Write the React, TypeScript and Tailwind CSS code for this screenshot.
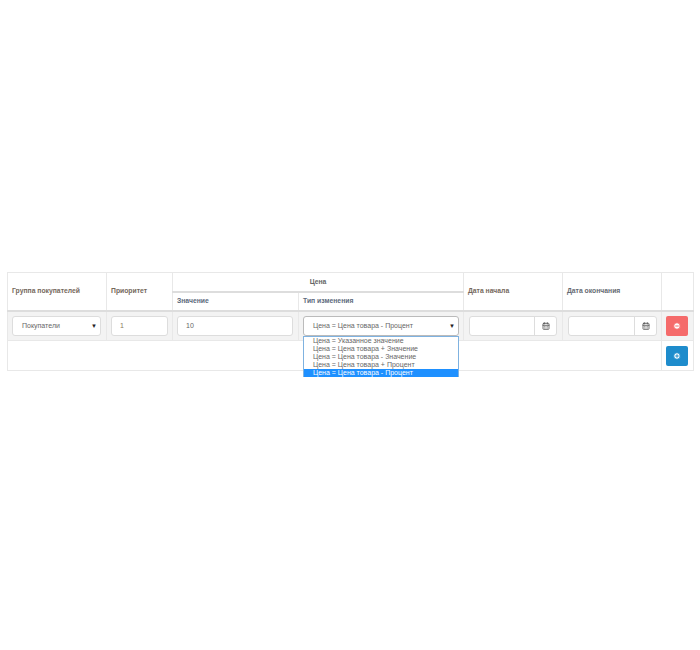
import React from "react";
import { CalendarDays, CircleMinus, CirclePlus } from "lucide-react";

const options = [
  "Цена = Указанное значение",
  "Цена = Цена товара + Значение",
  "Цена = Цена товара - Значение",
  "Цена = Цена товара + Процент",
  "Цена = Цена товара - Процент",
];

const Arrow = () => <span className="ml-auto text-[6px] leading-none text-[#222]">▼</span>;

const DateInput = () => (
  <div className="flex h-5 w-full rounded-[3px] border border-[#ddd] bg-white">
    <div className="flex-1 border-r border-[#ddd]" />
    <div className="flex w-[21px] items-center justify-center">
      <CalendarDays className="h-[8px] w-[8px] text-[#555]" strokeWidth={2.5} />
    </div>
  </div>
);

const App = () => {
  return (
    <div className="h-[650px] w-[700px] bg-white pt-[272px] pl-[7px] font-['Liberation_Sans',sans-serif] text-[7px] text-[#666]">
      <table className="w-[686px] table-fixed border-collapse border border-[#e4e4e4]">
        <colgroup>
          <col className="w-[99px]" />
          <col className="w-[66px]" />
          <col className="w-[126px]" />
          <col className="w-[165px]" />
          <col className="w-[99px]" />
          <col className="w-[99px]" />
          <col className="w-[32px]" />
        </colgroup>
        <thead className="text-[6.8px]">
          <tr className="h-[19px]">
            <th rowSpan={2} className="border border-[#e8e8e8] border-b-2 border-b-[#ddd] pl-[4px] text-left font-bold text-[#75685c]">Группа покупателей</th>
            <th rowSpan={2} className="border border-[#e8e8e8] border-b-2 border-b-[#ddd] pl-[4px] text-left font-bold text-[#75685c]">Приоритет</th>
            <th colSpan={2} className="border border-[#e8e8e8] border-b-2 border-b-[#ddd] pt-[1px] text-center font-bold text-[#666]">Цена</th>
            <th rowSpan={2} className="border border-[#e8e8e8] border-b-2 border-b-[#ddd] pl-[4px] text-left font-bold text-[#75685c]">Дата начала</th>
            <th rowSpan={2} className="border border-[#e8e8e8] border-b-2 border-b-[#ddd] pl-[4px] text-left font-bold text-[#656a72]">Дата окончания</th>
            <th rowSpan={2} className="border border-[#e8e8e8] border-b-2 border-b-[#ddd]" />
          </tr>
          <tr className="h-[19px]">
            <th className="border border-[#e8e8e8] border-b-2 border-b-[#ddd] pt-[1px] pl-[4px] text-left font-bold text-[#5c6a7c]">Значение</th>
            <th className="border border-[#e8e8e8] border-b-2 border-b-[#ddd] pt-[1px] pl-[4px] text-left font-bold text-[#5c6a7c]">Тип изменения</th>
          </tr>
        </thead>
        <tbody>
          <tr className="h-[30px] bg-[#f3f3f3]">
            <td className="border border-[#e8e8e8] pr-[5px] pl-[4px]">
              <div className="flex h-5 items-center rounded-[3px] border border-[#ddd] bg-white pt-[1px] pr-[3px] pl-[9px]">
                Покупатели
                <Arrow />
              </div>
            </td>
            <td className="border border-[#e8e8e8] px-[4px]">
              <div className="flex h-5 items-center rounded-[3px] border border-[#ddd] bg-white pl-[8px] text-[#8a7a60]">1</div>
            </td>
            <td className="border border-[#e8e8e8] pr-[5px] pl-[4px]">
              <div className="flex h-5 items-center rounded-[3px] border border-[#ddd] bg-white pl-[8px]">10</div>
            </td>
            <td className="relative border border-[#e8e8e8] px-[4px]">
              <div className="flex h-5 items-center rounded-[3px] border border-[#bbb] bg-white pt-[1px] pr-[3px] pl-[9px]">
                Цена = Цена товара - Процент
                <Arrow />
              </div>
              <ul className="absolute top-[24px] right-[4px] left-[4px] border-x border-t border-[#7fb2e0] bg-white leading-[8px]">
                {options.map((o, i) => (
                  <li key={o} className={i === 4 ? "h-[8px] bg-[#1e90ff] pl-[9px] text-white" : "h-[8px] pl-[9px]"}>
                    {o}
                  </li>
                ))}
              </ul>
            </td>
            <td className="border border-[#e8e8e8] px-[5px]">
              <DateInput />
            </td>
            <td className="border border-[#e8e8e8] pr-[4px] pl-[5px]">
              <DateInput />
            </td>
            <td className="border border-[#e8e8e8] pl-[4px]">
              <button className="flex h-5 w-[22px] items-center justify-center rounded-[2px] bg-[#f56b6b] text-white">
                <CircleMinus className="h-[8px] w-[8px] fill-white text-[#f56b6b]" strokeWidth={3} />
              </button>
            </td>
          </tr>
          <tr className="h-[30px]">
            <td colSpan={6} className="border border-[#e8e8e8]" />
            <td className="border border-[#e8e8e8] pl-[4px]">
              <button className="flex h-5 w-[22px] items-center justify-center rounded-[2px] bg-[#1e8ccc] text-white">
                <CirclePlus className="h-[8px] w-[8px] fill-white text-[#1e8ccc]" strokeWidth={3} />
              </button>
            </td>
          </tr>
        </tbody>
      </table>
    </div>
  );
};

export default App;
